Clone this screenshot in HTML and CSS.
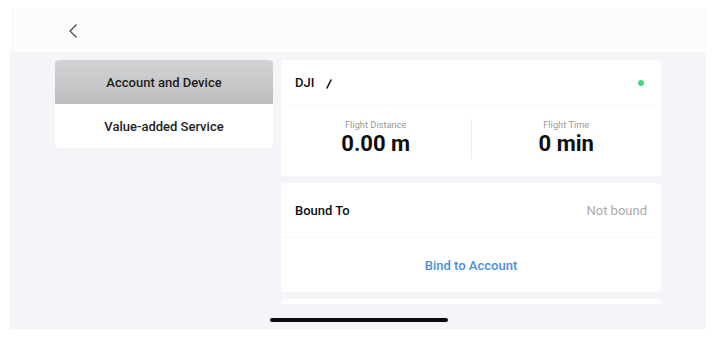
FILE: index.html
```html
<!DOCTYPE html>
<html>
<head>
<meta charset="utf-8">
<link rel="stylesheet" href="styles.css">
</head>
<body>
<div class="device">
  <div class="topbar">
    <svg class="back" width="12" height="16" viewBox="0 0 12 16"><path d="M9.5 1.5 L3 8 L9.5 14.5" fill="none" stroke="#444" stroke-width="1.2"/></svg>
  </div>
  <div class="panel">
    <div class="menu">
      <div class="menu-item active">Account and Device</div>
      <div class="menu-item">Value-added Service</div>
    </div>
    <div class="scroll">
      <div class="card">
        <div class="card-head">
          <span class="name">DJI</span>
          <svg class="edit" width="8" height="10" viewBox="0 0 8 10"><path d="M6 1 L2 9" stroke="#111" stroke-width="1.6" stroke-linecap="round"/></svg>
          <span class="dot"></span>
        </div>
        <div class="stats">
          <div class="stat">
            <div class="stat-label">Flight Distance</div>
            <div class="stat-value">0.00 m</div>
          </div>
          <div class="vsep"></div>
          <div class="stat">
            <div class="stat-label">Flight Time</div>
            <div class="stat-value">0 min</div>
          </div>
        </div>
      </div>
      <div class="card">
        <div class="row">
          <span class="row-title">Bound To</span>
          <span class="row-value">Not bound</span>
        </div>
        <div class="action">Bind to Account</div>
      </div>
      <div class="card tall"></div>
    </div>
    <div class="home"></div>
  </div>
</div>
</body>
</html>
```

FILE: styles.css
```css
html, body {
  margin: 0;
  padding: 0;
  background: #ffffff;
}
body {
  font-family: Roboto, "Liberation Sans", sans-serif;
  color: #1c1c1e;
}
.device {
  margin: 8px 12px 0 10px;
  width: 696px;
}
.topbar {
  height: 44px;
  background: #fcfcfd;
  display: flex;
  align-items: center;
  padding-left: 57px;
  box-sizing: border-box;
}
.back {
  display: block;
  margin-top: 2px;
}
.panel {
  position: relative;
  height: 277px;
  background: #f4f5f9;
  display: flex;
  gap: 8px;
  padding: 8px 45px 0 45px;
  box-sizing: border-box;
}
.menu {
  width: 218px;
  height: 88px;
  background: #fff;
  border-radius: 4px;
  overflow: hidden;
  display: flex;
  flex-direction: column;
}
.menu-item {
  height: 44px;
  display: flex;
  align-items: center;
  justify-content: center;
  font-size: 13px;
  font-weight: 500;
  color: #1e1e1e;
}
.menu-item.active {
  background: linear-gradient(#d2d3d5, #bdbec0);
}
.scroll {
  width: 380px;
  height: 244px;
  overflow: hidden;
  display: flex;
  flex-direction: column;
  gap: 7px;
}
.card {
  background: #fff;
  border-radius: 4px;
  flex-shrink: 0;
}
.card.tall {
  height: 100px;
}
.card-head {
  height: 45px;
  display: flex;
  align-items: center;
  padding: 0 14px;
  border-bottom: 1px solid #f9f9fa;
}
.name {
  font-size: 13px;
  font-weight: 500;
  color: #111;
}
.edit {
  margin-left: 11px;
  margin-top: 2px;
}
.dot {
  margin-left: auto;
  width: 6px;
  height: 6px;
  border-radius: 50%;
  background: #4cd57f;
  margin-right: 3px;
}
.stats {
  height: 70px;
  display: flex;
  align-items: center;
}
.stat {
  flex: 1;
  display: flex;
  flex-direction: column;
  align-items: center;
  margin-top: -6px;
}
.stat-label {
  font-size: 9.3px;
  color: #9a9a9a;
  line-height: 12px;
}
.stat-value {
  font-size: 22px;
  font-weight: 700;
  color: #0e0e0e;
  line-height: 26px;
}
.vsep {
  width: 1px;
  height: 40px;
  background: #ececee;
  margin-top: -4px;
}
.row {
  height: 54px;
  display: flex;
  align-items: center;
  justify-content: space-between;
  padding: 0 14px;
  border-bottom: 1px solid #f7f7f8;
}
.row-title {
  font-size: 13px;
  font-weight: 500;
  color: #111;
}
.row-value {
  font-size: 13px;
  color: #ababab;
}
.action {
  height: 54px;
  display: flex;
  align-items: center;
  justify-content: center;
  font-size: 13px;
  font-weight: 500;
  color: #4a8ee0;
}
.home {
  position: absolute;
  left: 260px;
  top: 266px;
  width: 178px;
  height: 4px;
  border-radius: 2px;
  background: #0a0a0a;
}
```
